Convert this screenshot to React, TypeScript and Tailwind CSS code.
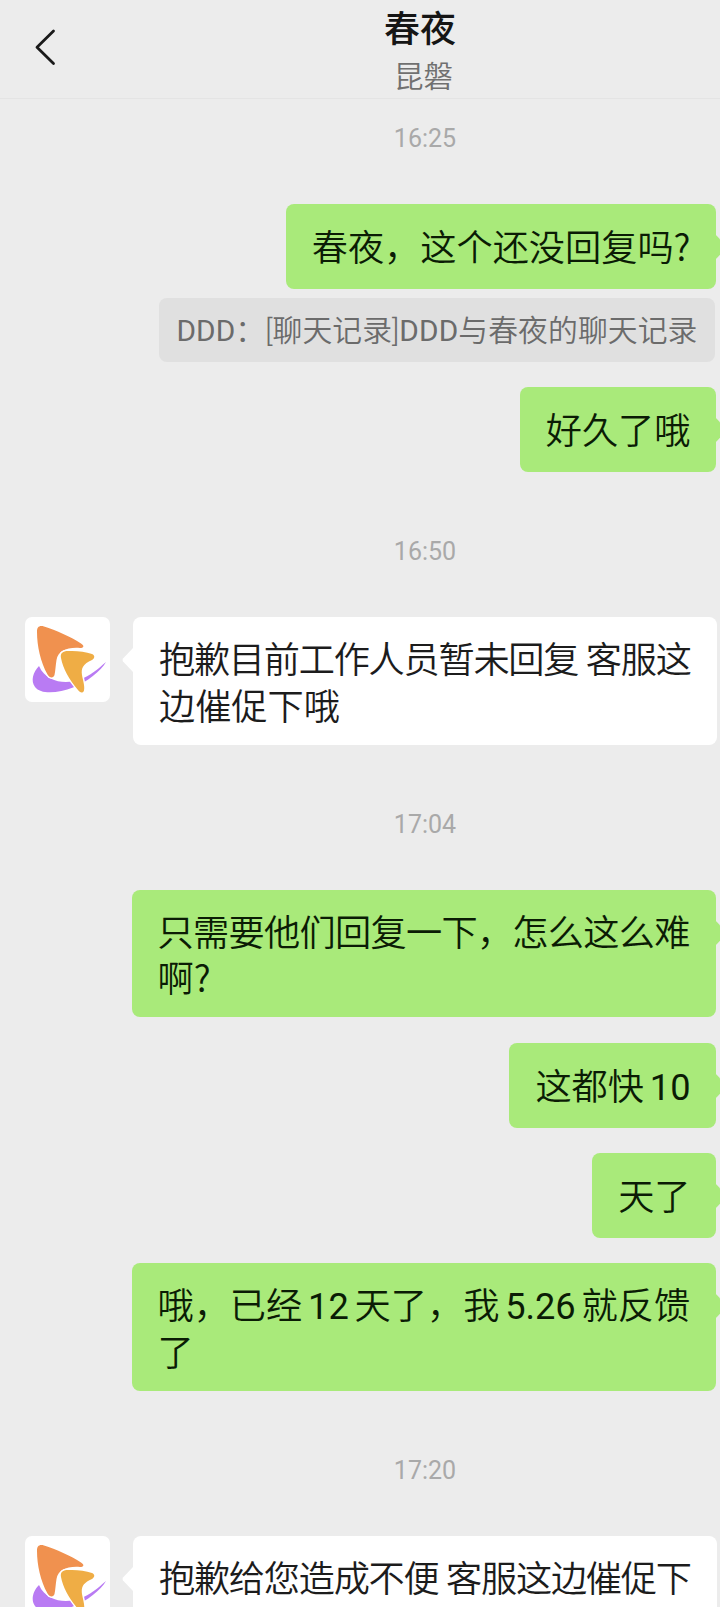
import type { ReactNode } from 'react';

type Message = {
  type: 'time' | 'sent' | 'received' | 'quote';
  lines: string[];
  className?: string;
};

const MESSAGES: Message[] = [
  { type: 'sent', lines: ['春夜，这个还没回复吗?'] },
  { type: 'quote', lines: ['DDD：[聊天记录]DDD与春夜的聊天记录'] },
  { type: 'sent', lines: ['好久了哦'] },
  { type: 'time', lines: ['16:50'] },
  {
    type: 'received',
    lines: ['抱歉目前工作人员暂未回复 客服这', '边催促下哦'],
    className: 'tracking-[-1.25px]',
  },
  { type: 'time', lines: ['17:04'] },
  {
    type: 'sent',
    lines: ['只需要他们回复一下，怎么这么难', '啊?'],
    className: 'tracking-[-0.7px]',
  },
  { type: 'sent', lines: ['这都快 10'] },
  { type: 'sent', lines: ['天了'] },
  { type: 'sent', lines: ['哦，已经 12 天了，我 5.26 就反馈', '了'] },
  { type: 'time', lines: ['17:20'] },
  {
    type: 'received',
    lines: ['抱歉给您造成不便 客服这边催促下', '哦'],
    className: 'tracking-[-1.25px]',
  },
];

function Avatar() {
  return (
    <div className="h-[85px] w-[85px] shrink-0 overflow-hidden rounded-[7px] bg-white">
      <svg viewBox="0 0 85 85" className="h-full w-full">
        <path
          d="M14 49C8 55 5.500 64 10 70C16 78 34 76 48 70.500C62 65 76 54 81 45C73 52 65 59 55 62.500C43 67 22 67 14 49Z"
          fill="#b97bf3"
        />
        <path
          d="M12 15C11.800 10 14.500 8 19 9.500C31 13 46 20 56 26.500C60 29 58.500 31 55 31C42 30 33 34 31.500 43C30.500 49 30.500 53 29.500 58C28.500 61.500 24.500 61 22.500 57.500C15.500 45 12 29 12 15Z"
          fill="#f0914f"
          stroke="#fff"
          strokeWidth="3"
          paintOrder="stroke"
        />
        <path
          d="M36 41C35 36 38 34 43 34C51 33.500 60 34.500 67 37C70 38.500 70 41 67 43C58 47 56 51 57 58C58 64 60 69 59 73.500C58 76.500 55 76 53 73C44 62 38 52 36 41Z"
          fill="#efad45"
          stroke="#fff"
          strokeWidth="3"
          paintOrder="stroke"
        />
      </svg>
    </div>
  );
}

function TimeLabel({ children }: { children: ReactNode }) {
  return (
    <div className="flex h-[145px] items-center justify-center pt-[15px] pl-[130px] text-[25px] text-[#a9a9a9]">
      {children}
    </div>
  );
}

// Chinese text is set a little lighter than the latin letters and digits in it
function Line({ text, className = '' }: { text: string; className?: string }) {
  return (
    <p className={className}>
      {text.split(/([A-Z0-9.]+|\?)/).map((part, i) => {
        if (i % 2 === 0) return part;
        return (
          <span
            key={i}
            className={
              part === '?' ? "font-['Noto_Sans_CJK_SC'] leading-none" : 'font-normal'
            }
          >
            {part}
          </span>
        );
      })}
    </p>
  );
}

function Bubble({ message }: { message: Message }) {
  const { type, lines, className } = message;
  const sent = type === 'sent';
  const wide = lines.length > 1;

  return (
    <div
      className={`relative rounded-lg pr-[25px] pl-[26px] text-[36.2px] leading-[46.5px] font-[350] whitespace-pre ${
        sent
          ? 'bg-[#a9ea7a] text-[#0b1c05] [word-spacing:-3px]'
          : 'bg-white text-[#1c1c1c]'
      } ${wide ? 'h-[127.5px] w-[584px] pt-[21px]' : 'h-[85px] pt-[22px]'}`}
    >
      <svg
        viewBox="0 0 12 26"
        className={`absolute top-[30px] h-[26px] w-3 ${
          sent ? '-right-[11px] fill-[#a9ea7a]' : '-left-[11px] rotate-180 fill-white'
        }`}
      >
        <path d="M0 0L11 11.500Q12 13 11 14.500L0 26Z" />
      </svg>
      {lines.map((line, i) => (
        <Line key={line} text={line} className={i === 0 ? className : ''} />
      ))}
    </div>
  );
}

function Row({ message }: { message: Message }) {
  if (message.type === 'time') return <TimeLabel>{message.lines[0]}</TimeLabel>;

  if (message.type === 'quote') {
    return (
      <div className="-mt-4 flex justify-end pr-[5px]">
        <div className="h-[64px] rounded-lg bg-[#e0e0e0] px-[17.5px] text-[29.8px] leading-[66.5px] font-[350] tracking-[0.1px] whitespace-nowrap text-[#6b6b6b]">
          <Line text={message.lines[0]} />
        </div>
      </div>
    );
  }

  if (message.type === 'received') {
    return (
      <div className="flex gap-[23px] pl-[25px]">
        <Avatar />
        <Bubble message={message} />
      </div>
    );
  }

  return (
    <div className="flex justify-end pr-[4.5px]">
      <Bubble message={message} />
    </div>
  );
}

export default function App() {
  return (
    <div className="flex h-[1607px] w-[720px] flex-col overflow-hidden bg-[#ececec] font-[Roboto,'Noto_Sans_CJK_SC',sans-serif]">
      <header className="flex h-[99px] shrink-0 items-start border-b border-[#e4e4e4]">
        <svg
          viewBox="0 0 24 38"
          className="mt-7 ml-[34px] h-[38px] w-6 shrink-0 fill-none stroke-[#1a1a1a] stroke-[2.8]"
          strokeLinecap="round"
          strokeLinejoin="round"
        >
          <path d="M19.500 3L3 19.300L19.500 35.500" />
        </svg>
        <div className="flex flex-1 flex-col items-center pt-0.5 pl-[66px]">
          <h1 className="mr-1 text-[36px] leading-[56px] font-medium text-[#151515]">春夜</h1>
          <p className="ml-[3px] text-[29.5px] leading-[38px] font-[350] text-[#707070]">昆磐</p>
        </div>
      </header>

      <main className="flex flex-col">
        <div className="-mt-[40.4px]">
          <TimeLabel>16:25</TimeLabel>
        </div>
        {MESSAGES.map((message, i) => {
          const next = MESSAGES[i + 1];
          const gap = message.type !== 'time' && next && next.type !== 'time';
          return (
            <div key={i} className={gap ? 'mb-[25.3px]' : ''}>
              <Row message={message} />
            </div>
          );
        })}
      </main>
    </div>
  );
}
